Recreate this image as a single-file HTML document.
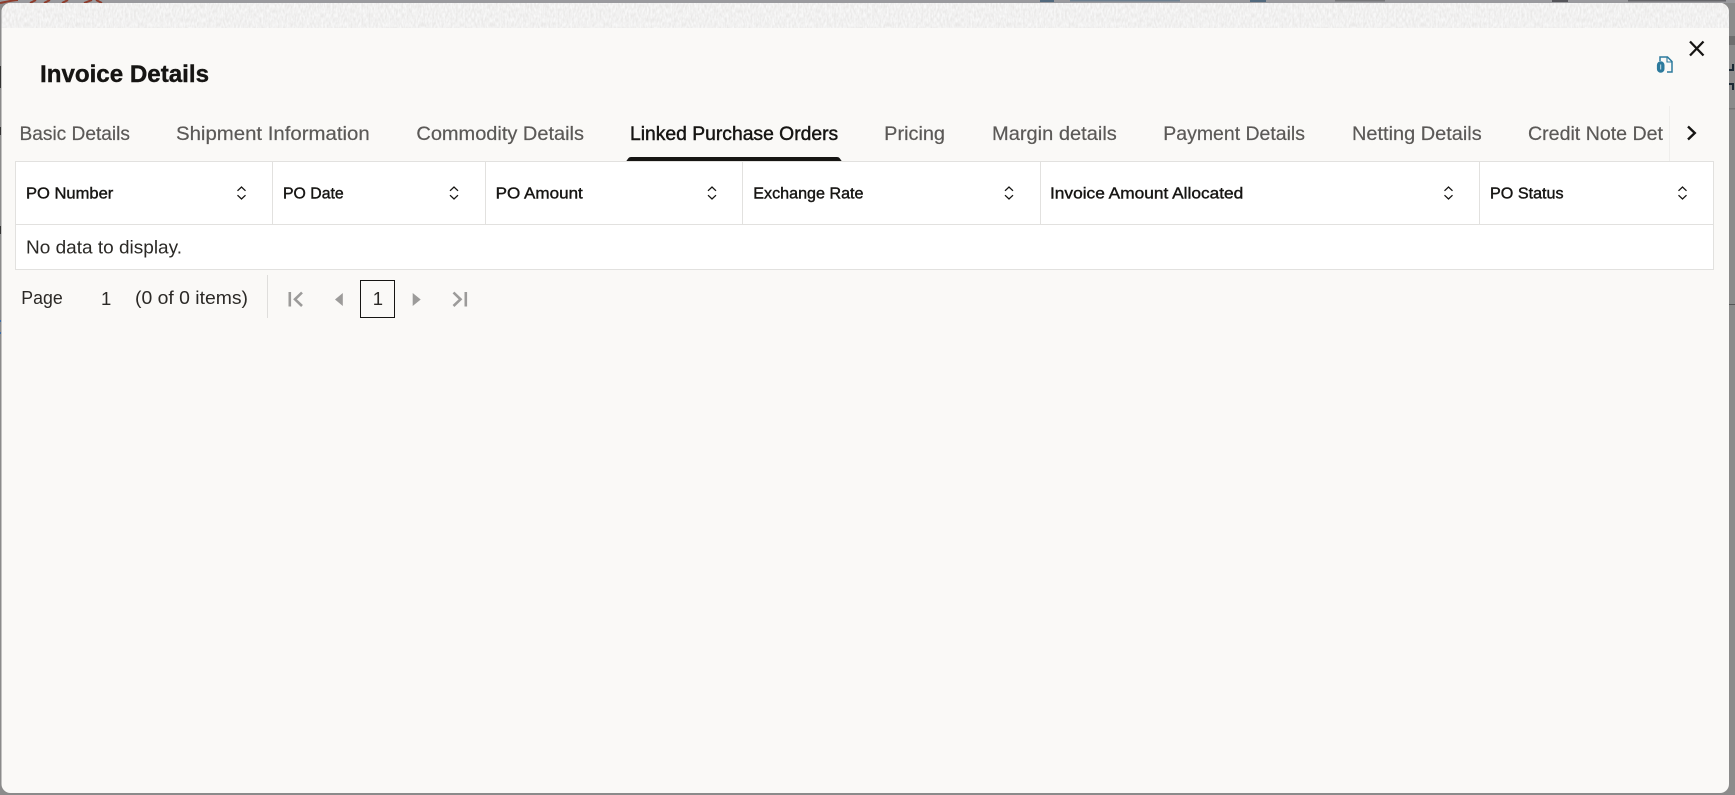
<!DOCTYPE html>
<html lang="en">
<head>
<meta charset="utf-8">
<title>Invoice Details</title>
<style>
html,body{margin:0;padding:0;width:1735px;height:795px;overflow:hidden;background:#8b8b8b}
svg{display:block;position:absolute;left:0;top:0}
text{font-family:"Liberation Sans",Arial,sans-serif;white-space:pre}
.tab{font-size:19.5px;fill:#5b5957;stroke:#5b5957;stroke-width:.2px}
.th{font-size:16px;fill:#161513;stroke:#161513;stroke-width:.4px}
.txt{font-size:18.5px;fill:#2b2926}
</style>
</head>
<body>
<svg width="1735" height="795" viewBox="0 0 1735 795" xmlns="http://www.w3.org/2000/svg">
  <defs>
    <filter id="noise" x="0" y="0" width="100%" height="100%">
      <feTurbulence type="fractalNoise" baseFrequency="0.55 0.22" numOctaves="2" seed="4"/>
      <feColorMatrix type="matrix" values="0 0 0 0 0.95  0 0 0 0 0.95  0 0 0 0 0.95  1.8 0 0 0 -0.4"/>
    </filter>
    <clipPath id="modal"><rect x="1.5" y="3" width="1727.5" height="790" rx="9" ry="9"/></clipPath>
  </defs>

  <!-- backdrop -->
  <rect width="1735" height="795" fill="#8b8b8b"/>
  <rect width="1735" height="3" fill="#9a9a9e"/>
  <path d="M0 3 C10 1 14 0 18 0 M30 3 L36 0 M44 3 L50 0 M62 3 L68 0 M84 3 L92 0 M96 0 L102 3" stroke="#8e3c2c" stroke-width="2" fill="none"/>
  <rect x="1040" y="0" width="14" height="2" fill="#52697d"/>
  <rect x="1070" y="0" width="110" height="1.5" fill="#6d7f8f"/>
  <rect x="1250" y="0" width="16" height="2" fill="#52697d"/>
  <rect x="1335" y="0" width="50" height="1.5" fill="#77777a"/>
  <rect x="1552" y="0" width="16" height="2" fill="#55555a"/>
  <rect x="1628" y="0" width="98" height="1.5" fill="#66666a"/>
  <rect x="1729" y="36" width="6" height="9" fill="#6e6e6e"/>
  <path d="M1733 64v6h-4" stroke="#1c2a35" stroke-width="2" fill="none"/>
  <path d="M1729 84h4v6" stroke="#1c2a35" stroke-width="2" fill="none"/>
  <rect x="1729" y="108" width="6" height="1.5" fill="#777"/>
  <rect x="1729" y="304" width="6" height="1" fill="#555"/>
  <rect x="0" y="66" width="1" height="22" fill="#333"/>
  <rect x="0" y="127" width="1" height="8" fill="#333"/>
  <rect x="0" y="226" width="1" height="8" fill="#333"/>
  <rect x="0" y="320" width="1" height="2" fill="#3a6ca8"/>
  <rect x="0" y="332" width="1" height="2" fill="#3a6ca8"/>

  <!-- modal -->
  <g clip-path="url(#modal)">
    <rect x="1.5" y="3" width="1727.5" height="790" fill="#faf9f7"/>
    <rect x="1.5" y="3" width="1727.5" height="25" fill="#e9e8e7"/>
    <rect x="1.5" y="3" width="1727.5" height="25" filter="url(#noise)"/>
  </g>

  <!-- title -->
  <text x="40" y="82" font-size="24" font-weight="700" fill="#161513" stroke="#161513" stroke-width=".4" textLength="169" lengthAdjust="spacingAndGlyphs">Invoice Details</text>

  <!-- attachment icon -->
  <g fill="none" stroke="#2c7a9d">
    <path d="M1660 61V57H1667.5L1672 61.5V72H1667" stroke-width="1.5"/>
    <path d="M1667 57V62H1672" stroke-width="1.1"/>
    <path d="M1657.5 65a3.2 3.2 0 0 1 6.4 0V69a3.2 3.2 0 0 1-6.4 0z" fill="#2c7a9d" stroke-width="1.2"/>
    <path d="M1660.7 64.5V69.5" stroke="#cfe2ea" stroke-width="1"/>
  </g>

  <!-- close -->
  <path d="M1690 41.5L1703.5 55.5M1703.5 41.5L1690 55.5" stroke="#161513" stroke-width="2.3" fill="none"/>

  <!-- tabs -->
  <text class="tab" x="19.5" y="140" textLength="110.5" lengthAdjust="spacingAndGlyphs">Basic Details</text>
  <text class="tab" x="176" y="140" textLength="193.7" lengthAdjust="spacingAndGlyphs">Shipment Information</text>
  <text class="tab" x="416.4" y="140" textLength="167.6" lengthAdjust="spacingAndGlyphs">Commodity Details</text>
  <text class="tab" x="630" y="140" textLength="208.2" lengthAdjust="spacingAndGlyphs" style="fill:#161513;stroke:#161513;stroke-width:.45px">Linked Purchase Orders</text>
  <text class="tab" x="884.2" y="140" textLength="60.8" lengthAdjust="spacingAndGlyphs">Pricing</text>
  <text class="tab" x="992" y="140" textLength="124.8" lengthAdjust="spacingAndGlyphs">Margin details</text>
  <text class="tab" x="1163.3" y="140" textLength="141.7" lengthAdjust="spacingAndGlyphs">Payment Details</text>
  <text class="tab" x="1352" y="140" textLength="129.7" lengthAdjust="spacingAndGlyphs">Netting Details</text>
  <text class="tab" x="1528" y="140" textLength="135" lengthAdjust="spacingAndGlyphs">Credit Note Det</text>

  <!-- active tab indicator -->
  <path d="M626 161.5L628.5 158Q629.3 157 631 157H837Q838.7 157 839.5 158L842 161.5Z" fill="#161513"/>

  <!-- tab overflow -->
  <rect x="1669" y="106" width="1" height="55" fill="#efeeec"/>
  <path d="M1688 126.5L1694.8 133L1688 139.5" stroke="#161513" stroke-width="2.4" fill="none"/>

  <!-- table -->
  <rect x="15.5" y="161.5" width="1698" height="108" fill="#fff" stroke="#e2e1df" stroke-width="1"/>
  <path d="M15.5 224.5H1713.5" stroke="#e2e1df" stroke-width="1"/>
  <path d="M272.5 161.5V224.5M485.5 161.5V224.5M742.5 161.5V224.5M1040.5 161.5V224.5M1479.5 161.5V224.5" stroke="#e2e1df" stroke-width="1"/>

  <text class="th" x="26" y="198.5" textLength="87.3" lengthAdjust="spacingAndGlyphs">PO Number</text>
  <text class="th" x="283" y="198.5" textLength="60.7" lengthAdjust="spacingAndGlyphs">PO Date</text>
  <text class="th" x="495.6" y="198.5" textLength="87.2" lengthAdjust="spacingAndGlyphs">PO Amount</text>
  <text class="th" x="753.3" y="198.5" textLength="110.2" lengthAdjust="spacingAndGlyphs">Exchange Rate</text>
  <text class="th" x="1050" y="198.5" textLength="193.3" lengthAdjust="spacingAndGlyphs">Invoice Amount Allocated</text>
  <text class="th" x="1490" y="198.5" textLength="73.6" lengthAdjust="spacingAndGlyphs">PO Status</text>

  <!-- sort icons -->
  <g fill="none" stroke="#161513" stroke-width="1.3">
    <path d="M237.5 190.8L241.5 187L245.5 190.8M237.5 195.2L241.5 199L245.5 195.2"/>
    <path d="M450 190.8L454 187L458 190.8M450 195.2L454 199L458 195.2"/>
    <path d="M708 190.8L712 187L716 190.8M708 195.2L712 199L716 195.2"/>
    <path d="M1005 190.8L1009 187L1013 190.8M1005 195.2L1009 199L1013 195.2"/>
    <path d="M1444.5 190.8L1448.5 187L1452.5 190.8M1444.5 195.2L1448.5 199L1452.5 195.2"/>
    <path d="M1678.5 190.8L1682.5 187L1686.5 190.8M1678.5 195.2L1682.5 199L1686.5 195.2"/>
  </g>

  <text class="txt" x="26" y="253.5" textLength="156" lengthAdjust="spacingAndGlyphs">No data to display.</text>

  <!-- pagination -->
  <text class="txt" x="21.3" y="304" textLength="41.4" lengthAdjust="spacingAndGlyphs">Page</text>
  <text class="txt" x="101" y="305">1</text>
  <text class="txt" x="135" y="304" textLength="113" lengthAdjust="spacingAndGlyphs">(0 of 0 items)</text>
  <rect x="267" y="275" width="1" height="43" fill="#dfdedc"/>

  <g fill="none" stroke="#9c9b9a" stroke-width="2.6">
    <path d="M289.8 292V306.5"/>
    <path d="M302 292.5L295 299.3L302 306"/>
    <path d="M465.8 292V306.5"/>
    <path d="M453.5 292.5L460.5 299.3L453.5 306"/>
  </g>
  <path d="M342.8 293L335 299.5L342.8 306Z" fill="#9c9b9a"/>
  <path d="M412.7 293L420.7 299.5L412.7 306Z" fill="#9c9b9a"/>

  <rect x="360.5" y="280.5" width="34" height="37" fill="none" stroke="#161513" stroke-width="1"/>
  <text class="txt" x="372.8" y="305">1</text>
</svg>
</body>
</html>
